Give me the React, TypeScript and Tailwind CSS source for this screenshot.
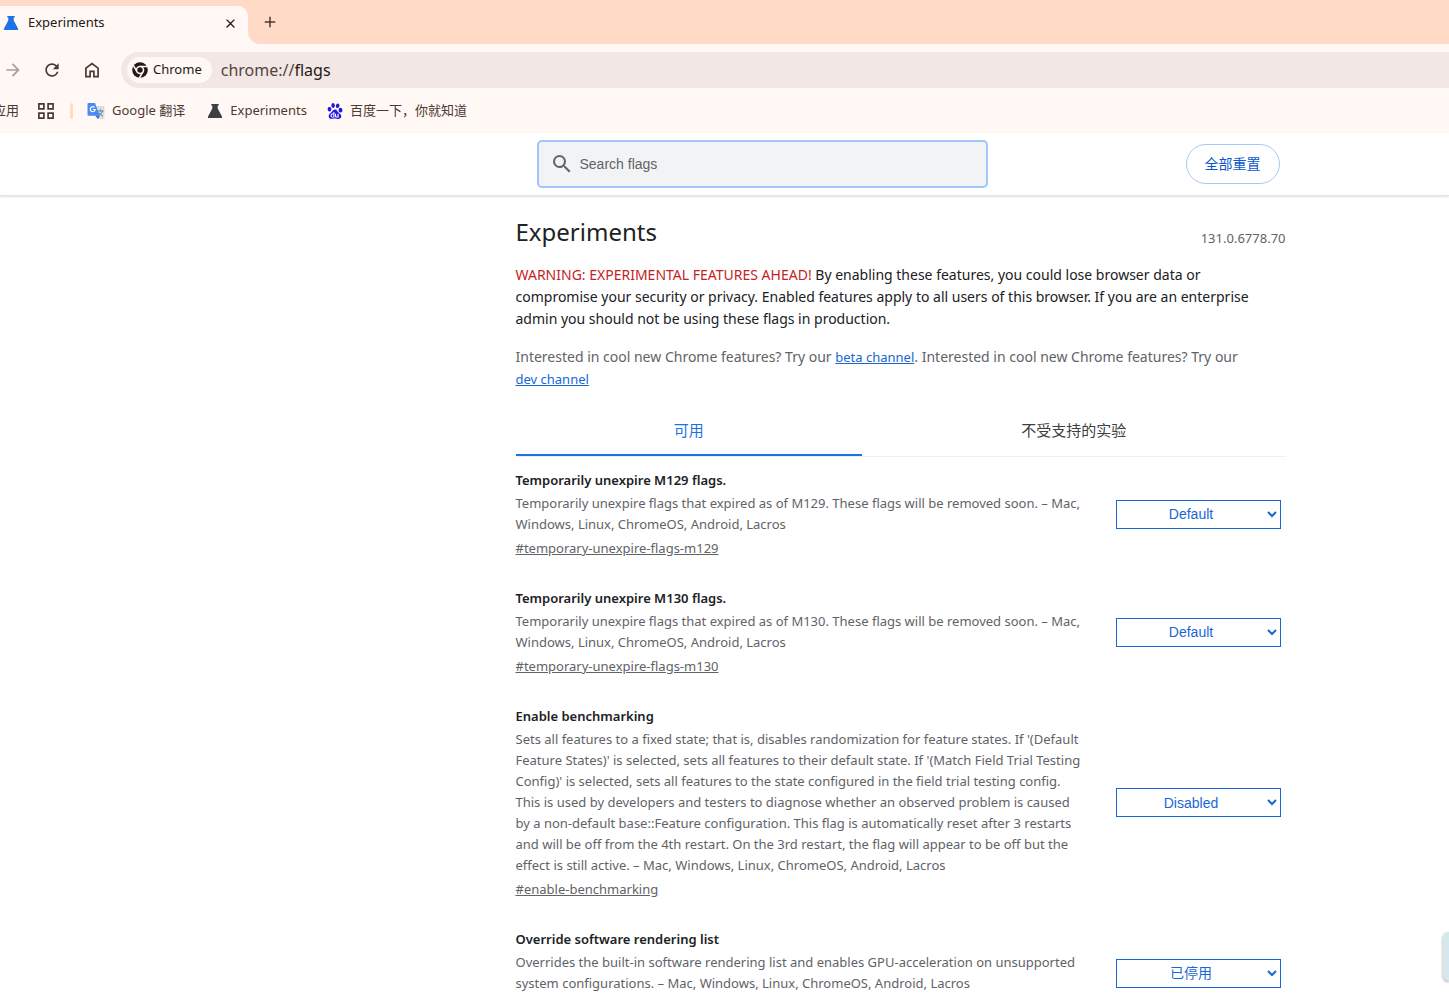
import { useState } from "react"
import { MdArrowForward, MdClose, MdAdd, MdRefresh, MdSearch } from "react-icons/md"
import { SiBaidu } from "react-icons/si"

interface Flag {
    id: string
    name: string
    description: string[]
    options: string[]
}

const flags: Flag[] = [
    {
        id: "temporary-unexpire-flags-m129",
        name: "Temporarily unexpire M129 flags.",
        description: [
            "Temporarily unexpire flags that expired as of M129. These flags will be removed soon. – Mac,",
            "Windows, Linux, ChromeOS, Android, Lacros",
        ],
        options: ["Default", "Enabled", "Disabled"],
    },
    {
        id: "temporary-unexpire-flags-m130",
        name: "Temporarily unexpire M130 flags.",
        description: [
            "Temporarily unexpire flags that expired as of M130. These flags will be removed soon. – Mac,",
            "Windows, Linux, ChromeOS, Android, Lacros",
        ],
        options: ["Default", "Enabled", "Disabled"],
    },
    {
        id: "enable-benchmarking",
        name: "Enable benchmarking",
        description: [
            "Sets all features to a fixed state; that is, disables randomization for feature states. If '(Default",
            "Feature States)' is selected, sets all features to their default state. If '(Match Field Trial Testing",
            "Config)' is selected, sets all features to the state configured in the field trial testing config.",
            "This is used by developers and testers to diagnose whether an observed problem is caused",
            "by a non-default base::Feature configuration. This flag is automatically reset after 3 restarts",
            "and will be off from the 4th restart. On the 3rd restart, the flag will appear to be off but the",
            "effect is still active. – Mac, Windows, Linux, ChromeOS, Android, Lacros",
        ],
        options: ["Disabled", "Default Feature States", "Match Field Trial"],
    },
    {
        id: "ignore-gpu-blocklist",
        name: "Override software rendering list",
        description: [
            "Overrides the built-in software rendering list and enables GPU-acceleration on unsupported",
            "system configurations. – Mac, Windows, Linux, ChromeOS, Android, Lacros",
        ],
        options: ["已停用", "已启用"],
    },
]

function FlaskIcon({ className }: { className?: string }) {
    return (
        <svg viewBox="0 0 16 16" className={className} fill="currentColor" aria-hidden="true">
            <path d="M4.300 1h7.400v1.600h-1v3l4.300 7.800Q15.700 15 14.200 15H1.800Q.3 15 1 13.400L5.300 5.600v-3h-1z" />
        </svg>
    )
}

function ChromeIcon() {
    return (
        <svg viewBox="0 0 16 16" className="h-4 w-4" aria-hidden="true">
            <circle cx="8" cy="8" r="7.800" fill="#231a16" />
            <circle cx="8" cy="8" r="4.300" fill="#fff8f5" />
            <path d="M8 4.500h7.500M5 9.700L1.300 3.300M11 9.700L7.300 16.100" stroke="#fff8f5" strokeWidth="1.600" />
            <circle cx="8" cy="8" r="2.700" fill="#231a16" />
        </svg>
    )
}

function HomeIcon() {
    return (
        <svg viewBox="0 0 16 16" className="h-4 w-4" fill="none" stroke="currentColor" strokeWidth="1.7" aria-hidden="true">
            <path d="M1.900 14.600V6.200L8 1.500l6.100 4.700v8.400H9.900V9.300H6.100v5.300z" />
        </svg>
    )
}

function AppsIcon() {
    return (
        <svg viewBox="0 0 16 16" className="h-4 w-4" fill="none" stroke="currentColor" strokeWidth="1.7" aria-hidden="true">
            <path d="M.9.900h5v5h-5zM10.100.900h5v5h-5zM.9 10.100h5v5h-5zM10.100 10.100h5v5h-5z" />
        </svg>
    )
}

function TranslateIcon() {
    return (
        <svg viewBox="0 0 18 18" className="h-[18px] w-[18px]" aria-hidden="true">
            <path d="M7 4h9.500q1 0 1 1v11q0 1-1 1H11z" fill="#dadce0" />
            <path d="M10.500 9h6M13.500 7.600V9M15.500 9q-.8 3-4 4.800M11.800 10.500q1.500 2.500 4.200 3.500" stroke="#607d8b" strokeWidth="1" fill="none" />
            <path d="M8 13.500h5L11 17z" fill="#3367d6" />
            <path d="M1.500 1H8l4.800 12.800H1.500q-1 0-1-1V2q0-1 1-1z" fill="#4a8af4" />
            <path d="M7.600 5.400A2.500 2.500 0 1 0 8.300 7.500H5.900" stroke="#fff" strokeWidth="1.200" fill="none" />
        </svg>
    )
}

function BrowserChrome() {
    return (
        <div className="bg-[#fff8f5] text-[#4c3a32]">
            <div className="flex h-11 bg-[#ffdbc7]">
                <div className="flex w-[248px] flex-col justify-end">
                    <div className="flex h-[38px] items-center rounded-tr-[10px] bg-[#fff8f5] pr-[10px] pb-1 pl-[3px]">
                        <FlaskIcon className="h-4 w-4 text-[#1a73e8]" />
                        <span className="ml-[9px] flex-1 text-[13px] text-[#231a16]">Experiments</span>
                        <button aria-label="Close tab" className="text-[#231a16]">
                            <MdClose className="h-[15px] w-[15px]" />
                        </button>
                    </div>
                </div>
                <div className="flex flex-1 items-center bg-[#fff8f5]">
                    <div className="flex h-11 flex-1 items-center rounded-bl-[12px] bg-[#ffdbc7] pl-[13px]">
                        <button aria-label="New tab">
                            <MdAdd className="h-[18px] w-[18px]" />
                        </button>
                    </div>
                </div>
            </div>

            <div className="flex h-[51px] items-center">
                <button aria-label="Forward" className="ml-[3px] text-[#a89e9a]">
                    <MdArrowForward className="h-5 w-5" />
                </button>
                <button aria-label="Reload" className="ml-[19px]">
                    <MdRefresh className="h-5 w-5" />
                </button>
                <button aria-label="Home" className="ml-[22px]">
                    <HomeIcon />
                </button>
                <div className="ml-[21px] flex h-9 flex-1 items-center rounded-l-full bg-[#f2e7e4] pl-[6px]">
                    <button className="flex h-[26px] items-center gap-[5px] rounded-full bg-[#fff8f5] pr-[10px] pl-[5px] text-[13px] text-[#231a16]">
                        <ChromeIcon />
                        Chrome
                    </button>
                    <div className="ml-[9px] text-base text-[#54433c]">
                        chrome://<span className="text-[#231a16]">flags</span>
                    </div>
                </div>
            </div>

            <div className="flex h-[38px] items-center pb-[6px] text-[13px]">
                <a href="#apps" className="-ml-[7px]">
                    应用
                </a>
                <button aria-label="Tab groups" className="ml-[19px]">
                    <AppsIcon />
                </button>
                <div className="ml-4 h-4 w-[3px] rounded-full bg-[#ffdbc7]" />
                <a href="#translate" className="ml-[14px] flex items-center gap-[7px]">
                    <TranslateIcon />
                    Google 翻译
                </a>
                <a href="#experiments" className="ml-[22px] flex items-center gap-[7px]">
                    <FlaskIcon className="h-4 w-4 text-[#3c4043]" />
                    Experiments
                </a>
                <a href="#baidu" className="ml-[20px] flex items-center gap-[7px]">
                    <span className="flex h-4 w-4 items-center justify-center bg-white">
                        <SiBaidu className="h-4 w-4 text-[#2319dc]" />
                    </span>
                    百度一下，你就知道
                </a>
            </div>
        </div>
    )
}

function FlagRow({ flag }: { flag: Flag }) {
    const [value, setValue] = useState(flag.options[0])

    return (
        <div className="mb-[26px] flex items-center justify-between pr-[5px]">
            <div className="w-[586px] text-[13px] leading-[21px] text-[#5f6368]">
                <h3 id={flag.id} className="mb-px leading-6 font-semibold text-[#202124]">
                    {flag.name}
                </h3>
                <p className="whitespace-pre-line">{flag.description.join("\n")}</p>
                <a href={`#${flag.id}`} className="mt-px block leading-6 underline">
                    #{flag.id}
                </a>
            </div>
            <select
                aria-labelledby={flag.id}
                value={value}
                onChange={(e) => setValue(e.target.value)}
                className="h-[29px] w-[165px] border border-[#1967d2] bg-white pr-[2px] text-center font-['Liberation_Sans','Noto_Sans_CJK_SC',sans-serif] text-sm text-[#1967d2]"
            >
                {flag.options.map((option) => (
                    <option key={option}>{option}</option>
                ))}
            </select>
        </div>
    )
}

export default function App() {
    const [query, setQuery] = useState("")
    const [tab, setTab] = useState("available")

    return (
        <div className="relative flex h-screen flex-col overflow-hidden bg-white font-['Noto_Sans','Noto_Sans_CJK_SC',sans-serif]">
            <BrowserChrome />

            <header className="border-b border-[#e3e3e3] pl-[352px] shadow-[0_1px_2px_rgba(0,0,0,0.12)]">
                <div className="mx-auto flex h-[62px] max-w-[770px] items-center justify-between pr-[6px] pl-[21px]">
                    <div className="flex h-12 w-[451px] items-center gap-[6px] rounded-[5px] border-2 border-[#a1c5f8] bg-[#f1f3f4] pl-[11px]">
                        <MdSearch className="h-6 w-6 text-[#5f6368]" />
                        <input
                            type="text"
                            aria-label="Search flags"
                            placeholder="Search flags"
                            value={query}
                            onChange={(e) => setQuery(e.target.value)}
                            className="flex-1 bg-transparent font-['Liberation_Sans',sans-serif] text-sm outline-none placeholder:text-[#5f6368]"
                        />
                    </div>
                    <button className="h-10 rounded-full border border-[#a8c7fa] px-[18px] text-sm text-[#0b57d0]">全部重置</button>
                </div>
            </header>

            <main className="min-h-0 flex-1 overflow-hidden pl-[352px]">
                <div className="mx-auto max-w-[770px]">
                    <div className="flex items-end justify-between pt-5">
                        <h1 className="text-[24px] leading-8 text-[#202124]">Experiments</h1>
                        <span className="text-[13px] leading-5 text-[#5f6368]">131.0.6778.70</span>
                    </div>

                    <p className="mt-4 text-[14px] leading-[22px] text-[#202124]">
                        <span className="text-[#c5221f]">WARNING: EXPERIMENTAL FEATURES AHEAD!</span> By enabling these features, you could lose
                        browser data or compromise your security or privacy. Enabled features apply to all users of this browser. If you are an
                        enterprise admin you should not be using these flags in production.
                    </p>

                    <p className="mt-4 text-[14px] leading-[22px] text-[#5f6368]">
                        Interested in cool new Chrome features? Try our{" "}
                        <a href="#beta" className="text-[13px] text-[#1967d2] underline">
                            beta channel
                        </a>
                        . Interested in cool new Chrome features? Try our{" "}
                        <a href="#dev" className="text-[13px] whitespace-nowrap text-[#1967d2] underline">
                            dev channel
                        </a>
                    </p>

                    <div role="tablist" className="mt-4 grid grid-cols-[9fr_11fr] border-b border-[#f0f0f0] text-[15px]">
                        <button
                            role="tab"
                            aria-selected={tab === "available"}
                            onClick={() => setTab("available")}
                            className={`h-[50px] border-b-2 ${tab === "available" ? "border-[#1a73e8] text-[#1a73e8]" : "border-transparent text-[#3c4043]"}`}
                        >
                            可用
                        </button>
                        <button
                            role="tab"
                            aria-selected={tab === "unavailable"}
                            onClick={() => setTab("unavailable")}
                            className={`h-[50px] border-b-2 ${tab === "unavailable" ? "border-[#1a73e8] text-[#1a73e8]" : "border-transparent text-[#3c4043]"}`}
                        >
                            不受支持的实验
                        </button>
                    </div>

                    <div className="pt-[11px]">
                        {flags.map((flag) => (
                            <FlagRow key={flag.id} flag={flag} />
                        ))}
                    </div>
                </div>
            </main>

            {/* side widget docked to the window edge */}
            <div className="absolute right-0 bottom-[19px] h-[49px] w-[6px] rounded-l-[10px] bg-[#d5e8ed] shadow-[0_1px_3px_rgba(0,0,0,0.4)]" />
        </div>
    )
}
